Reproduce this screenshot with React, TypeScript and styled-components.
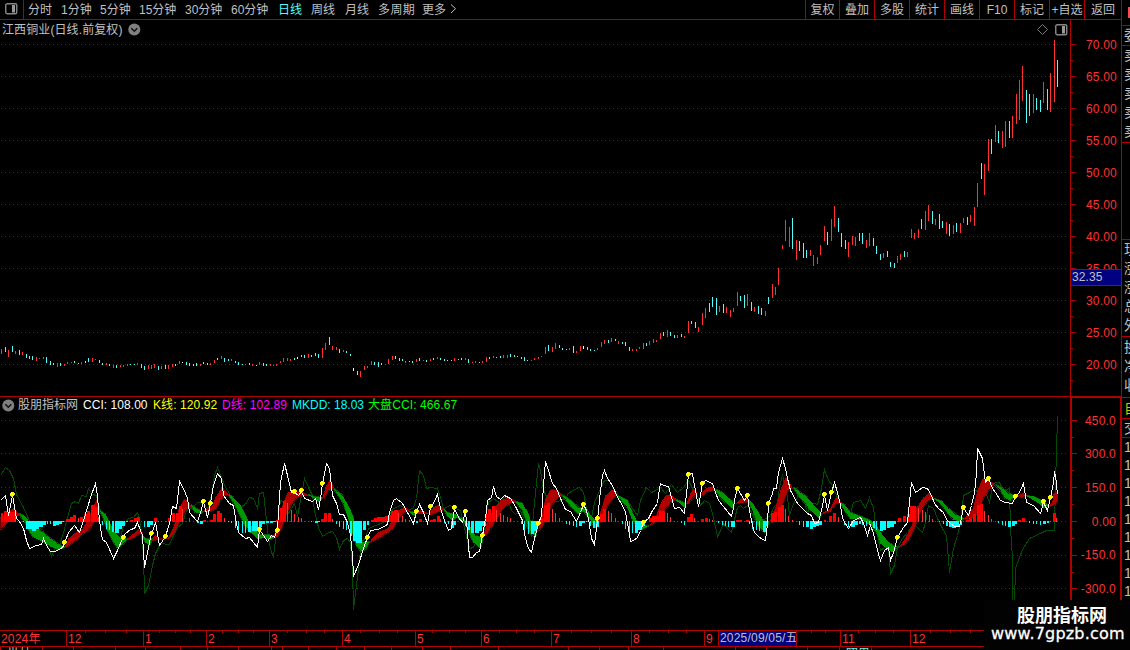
import React from "react";
import styled, { createGlobalStyle } from "styled-components";

const LINE = "#b00000";
const RED = "#ff3232";
const CYAN = "#54fcfc";
const TEXT = "#c0c0c0";

const GlobalStyle = createGlobalStyle`
  body {
    margin: 0;
    background: #000;
    overflow: hidden;
    font-family: "Liberation Sans", "Noto Sans CJK SC", sans-serif;
    font-size: 12px;
    color: ${TEXT};
  }
  svg { display: block; }
`;

const Screen = styled.div`
  position: relative;
  display: flex;
  width: 1130px;
  height: 650px;
  overflow: hidden;
  background: #000;
`;

const Main = styled.main`
  display: flex;
  flex-direction: column;
  width: 1121px;
  flex: none;
`;

const TopBar = styled.header`
  display: flex;
  box-sizing: border-box;
  height: 20px;
  flex: none;
  border-bottom: 1px solid ${LINE};
  line-height: 20px;
  white-space: nowrap;
`;

const IconCell = styled.div`
  box-sizing: border-box;
  width: 24px;
  padding: 3px 0 0 5px;
  margin-right: 4px;
  border-right: 1px solid ${LINE};
`;

const Period = styled.span<{ $w: number; $active?: boolean; $gap?: number }>`
  width: ${(p) => p.$w}px;
  height: 19px;
  letter-spacing: ${(p) => p.$gap ?? 0}px;
  color: ${(p) => (p.$active ? CYAN : TEXT)};
`;

const Chevron = styled.div`
  padding-top: 4px;
  flex: 1;
`;

const ToolButton = styled.span<{ $w: number }>`
  box-sizing: border-box;
  width: ${(p) => p.$w}px;
  height: 19px;
  border-left: 1px solid ${LINE};
  text-align: center;
`;

const Panel = styled.section<{ $h: number }>`
  display: flex;
  height: ${(p) => p.$h}px;
  flex: none;
`;

const Plot = styled.div<{ $ruled?: boolean }>`
  box-sizing: border-box;
  width: 1070px;
  flex: none;
  border-top: ${(p) => (p.$ruled ? `1px solid ${LINE}` : "0")};
`;

const Title = styled.div`
  display: flex;
  align-items: center;
  box-sizing: border-box;
  height: 20px;
  padding: 0 2px 1px 2px;
  white-space: nowrap;
`;

const TitleText = styled.span`
  width: 126px;
  line-height: 18px;
  padding-top: 1px;
  letter-spacing: 0.1px;
`;

const Spacer = styled.div`
  flex: 1;
`;

const TitleIcons = styled.div`
  display: flex;
  align-items: center;
  gap: 7px;
`;

const Legend = styled.div`
  display: flex;
  align-items: center;
  height: 17px;
  padding-left: 2px;
  line-height: 15px;
  white-space: nowrap;
`;

const LegendItem = styled.span<{ $w: number; $color: string; $gap?: number; $left?: number }>`
  width: ${(p) => p.$w}px;
  padding: 1px 0;
  margin-left: ${(p) => p.$left ?? 0}px;
  color: ${(p) => p.$color};
  letter-spacing: ${(p) => p.$gap ?? 0}px;
`;

const Axis = styled.aside<{ $thick?: boolean }>`
  position: relative;
  display: flex;
  box-sizing: border-box;
  width: 51px;
  border-left: ${(p) => (p.$thick ? 2 : 1)}px solid ${LINE};
  border-top: ${(p) => (p.$thick ? `2px solid ${LINE}` : "0")};
  border-right: ${(p) => (p.$thick ? `1px solid ${LINE}` : "0")};
`;

const Labels = styled.div<{ $top: number; $right: number }>`
  flex: 1;
  padding: ${(p) => p.$top}px ${(p) => p.$right}px 0 0;
`;

const AxisLabel = styled.div<{ $h: number }>`
  height: ${(p) => p.$h}px;
  line-height: ${(p) => p.$h + 2}px;
  text-align: right;
  letter-spacing: 0.2px;
  color: ${RED};
`;

const PriceBadge = styled.div`
  position: absolute;
  top: 249px;
  left: 0;
  box-sizing: border-box;
  width: 50px;
  height: 17px;
  border-top: 1px solid ${LINE};
  border-bottom: 1px solid ${LINE};
  padding-left: 1px;
  background: #000080;
  line-height: 15px;
  letter-spacing: 0.1px;
`;

const TimeAxis = styled.div`
  position: relative;
  display: flex;
  box-sizing: border-box;
  height: 17px;
  flex: none;
  border-top: 1px solid ${LINE};
  border-bottom: 1px solid ${LINE};
  line-height: 16px;
  color: ${RED};
  white-space: nowrap;
`;

const Month = styled.span<{ $w: number; $first?: boolean }>`
  box-sizing: border-box;
  width: ${(p) => p.$w}px;
  height: 15px;
  padding-left: 1px;
  letter-spacing: 0.2px;
  border-left: ${(p) => (p.$first ? "0" : `1px solid ${LINE}`)};
`;

const DateBadge = styled.span`
  box-sizing: border-box;
  width: 78px;
  height: 15px;
  padding-left: 1px;
  border-left: 1px solid ${LINE};
  background: #000080;
  color: ${TEXT};
  line-height: 15px;
  letter-spacing: 0.2px;
`;

const TickOverlay = styled.svg`
  position: absolute;
  top: 0;
  left: 0;
`;

const NextPane = styled.div`
  position: relative;
  display: flex;
  height: 3px;
  overflow: hidden;
  line-height: 14px;
  white-space: nowrap;
`;

const PaneText = styled.span<{ $left: number; $color: string }>`
  margin-left: ${(p) => p.$left}px;
  color: ${(p) => p.$color};
`;

const Side = styled.aside`
  box-sizing: border-box;
  width: 9px;
  flex: none;
  overflow: hidden;
  border-left: 1px solid ${LINE};
`;

const SideTop = styled.div`
  box-sizing: border-box;
  height: 25px;
  padding: 7px 0 0 6px;
`;

const SideMark = styled.div`
  height: 11px;
  background: #ff4848;
`;

const SideGroup = styled.div<{ $h: number; $top?: number }>`
  box-sizing: border-box;
  height: ${(p) => p.$h}px;
  padding: ${(p) => p.$top ?? 0}px 0 0 2px;
  border-top: 1px solid ${LINE};
  overflow: hidden;
`;

const SideText = styled.div<{ $h: number; $color?: string }>`
  width: 20px;
  height: ${(p) => p.$h}px;
  line-height: ${(p) => p.$h}px;
  font-size: 14px;
  color: ${(p) => p.$color ?? TEXT};
`;

const Watermark = styled.div`
  position: absolute;
  right: 0;
  bottom: 0;
  box-sizing: border-box;
  width: 146px;
  height: 50px;
  padding: 4px 0 0 7px;
  background: #020202;
  color: #fff;
`;

const MarkName = styled.div`
  padding-left: 26px;
  font: bold 18px/21px "Noto Sans CJK SC", sans-serif;
`;

const MarkSite = styled.div`
  font: 16px/17px "DejaVu Sans", sans-serif;
  letter-spacing: 0.2px;
  -webkit-text-stroke: 0.3px #fff;
`;

/* High and low of each daily bar in plot pixels; the letter is its colour. */
const candleText = `
349-354r 347-352c 350-357r 346-352c 351-354r 350-355c 352-355r 354-358c 356-359c 356-360c
357-361r 358-359r 357-359r 357-363c 361-365c 363-365c 363-367r 363-366c 364-366r 362-364r
362-363r 361-363c 363-364c 362-364r 361-363c 358-362c 358-362r 359-360r 360-363c 363-365c
363-365r 364-366c 365-368r 365-368c 365-367r 365-367r 364-366r 364-365c 364-365c 363-365r
364-368c 366-370c 365-369r 365-369r 364-368r 366-370c 366-369r 365-369c 365-369r 364-367r
364-366c 361-364r 362-363w 362-365c 363-366c 364-366c 363-366c 364-366r 362-364c 363-365c
363-365r 360-363r 358-360c 356-359r 358-362c 359-361c 359-361r 361-363c 362-365c 364-365c
364-365r 363-365c 364-366r 365-366c 362-365r 363-366c 364-366c 364-366r 365-366r 364-366r
361-363r 358-362r 358-361r 359-361r 358-360c 357-359w 355-357c 355-358c 354-358r 355-357c
353-356c 354-358c 348-358r 343-350r 337-345c 346-350r 347-350r 349-353c 350-352r 351-353c
354-356c 368-371w 371-375c 371-377r 366-370r 366-368r 361-365r 362-365c 362-367c 363-365c
364-365r 359-364r 356-360r 356-359c 358-361c 359-361c 361-363r 361-362c 361-363c 359-362r
358-361c 360-361r 360-362c 359-361r 358-360c 357-359r 358-360c 359-361c 360-361c 360-361c
358-361r 359-360c 358-360c 358-360r 359-363c 362-363r 361-363r 362-363c 361-363r 357-362r
357-359c 356-358r 357-358c 356-358c 355-358r 355-358r 354-357c 355-357c 356-357c 357-359c
357-361c 360-361c 360-361r 358-360r 357-359r 356-357r 347-354r 345-351c 347-352r 343-349r
345-348c 348-350c 349-350c 348-350r 346-353c 351-353r 346-351r 346-349w 347-350c 349-351c
350-351c 348-350r 342-347r 340-344r 340-343c 338-342r 339-341c 341-344r 342-344c 342-346c
347-351c 349-351r 349-351r 347-349r 343-349r 343-346c 341-345r 339-343r 340-342r 333-339r
332-336c 330-337r 332-336c 335-338c 335-338r 334-337c 336-338r 321-333r 321-324c 322-328c
327-332r 313-325r 308-318r 303-312c 297-307c 298-315c 306-312r 304-313c 307-313r 310-317r
308-312r 292-306r 296-301c 295-308c 294-306r 302-311c 307-312r 306-314c 308-315c 311-316r
297-304c 284-298r 287-295r 268-285r 245-249r 220-241r 227-247r 218-249c 240-260r 241-251c
243-258c 250-258c 250-256r 255-266r 257-264r 245-255r 226-241r 232-245c 219-241r 206-227r
218-232c 233-247c 240-249c 242-257r 236-245r 237-246r 233-241c 233-244c 240-248r 233-246r
238-246c 246-254c 254-260c 253-258r 251-257c 262-267c 263-268c 256-263r 254-260r 251-257c
252-257r 229-238r 233-239r 229-238r 219-229c 211-230r 205-221r 211-224c 219-225r 214-229c
221-228c 222-234r 224-236c 225-234r 223-232c 223-233r 218-223r 217-225c 215-222r 207-226r
183-207r 163-179c 164-195r 139-171r 139-154c 125-142r 131-143c 131-148r 121-147r 121-138c
116-138r 94-124r 80-120r 66-101r 90-123c 94-116c 94-113r 98-110c 100-112c 82-103r
89-110c 73-112r 40-102r 60-87c`;

const candleColor: Record<string, string> = { r: RED, c: CYAN, w: "#ffffff" };
const dayX = (i: number) => Math.floor(1.6 + i * 3.486);
const candles = candleText.trim().split(/\s+/).map((s, i) => {
  const [top, bottom] = s.slice(0, -1).split("-").map(Number);
  return { x: dayX(i), top, bottom, color: candleColor[s.slice(-1)] };
});

const cciLine = `0,500 5,495 8,515 12,495 15,512 16,518 19,521 23,528 26,540 29,548 36,545 41,544 43,538
46,545 50,551 55,551 62,547 64,543 68,532 74,525 79,532 83,520 87,507 90,497 95,483 97,495 98,510 100,528
102,539 106,542 113,558 117,550 122,538 125,533 130,529 134,528 137,522 142,535 144,567 147,552 150,537
155,522 159,545 165,536 169,523 172,506 176,508 179,481 183,488 187,498 189,512 197,521 200,512 203,501
207,517 210,503 213,485 217,473 221,478 223,495 229,503 233,505 235,518 238,532 245,538 249,537 257,547
259,529 267,541 271,535 274,537 277,528 280,482 284,463 287,475 291,492 294,492 298,495 301,491 304,498
312,501 315,498 318,509 320,498 322,483 326,463 329,468 332,495 336,503 339,514 343,514 347,522 350,535
352,555 353,576 358,564 363,548 367,537 370,530 378,529 387,524 389,512 393,500 396,498 402,503 407,512
413,523 416,511 419,504 423,512 427,523 430,507 433,503 437,494 440,508 444,520 448,530 451,528 454,508
458,517 462,522 465,511 467,532 469,557 472,557 476,552 479,551 482,535 485,518 487,500 491,497 493,486
496,496 500,499 504,495 510,498 515,506 517,510 522,520 525,538 528,548 531,552 534,538 538,523 541,515
543,485 545,461 548,470 552,483 556,488 560,498 565,509 570,511 576,521 580,512 583,504 586,510 588,518
591,538 594,544 597,520 600,490 602,475 604,470 607,478 612,485 617,497 622,505 625,512 628,528 630,541
633,540 637,537 640,530 643,522 648,518 652,510 657,503 658,495 660,483 663,485 668,486 671,497 674,508
679,507 684,513 686,493 688,474 692,473 694,485 698,506 700,495 702,483 705,480 712,483 715,492 718,500
723,506 731,516 733,507 735,495 737,488 740,493 744,500 747,495 749,510 752,525 754,532 758,536 762,539
765,540 767,523 768,503 772,493 773,488 776,488 778,472 780,465 782,458 785,468 787,478 790,490 797,503
802,508 807,513 811,515 814,523 818,522 821,510 824,495 827,510 831,492 834,482 837,492 840,505 842,518
848,528 853,520 860,517 863,523 867,535 870,525 873,533 877,550 880,560 884,550 888,547 890,560 893,552
897,537 900,532 903,527 907,522 909,502 911,482 915,492 918,490 922,487 927,488 931,495 934,503 938,508
943,512 946,519 950,523 954,526 959,526 961,517 963,507 966,512 968,515 971,505 974,493 976,472 977,448
982,458 985,482 988,478 992,488 995,492 1000,500 1005,502 1012,503 1015,496 1019,492 1023,483 1026,502
1033,505 1040,513 1043,502 1047,510 1050,497 1053,482 1054,471 1056,482 1057,497`;

const marketLine = `0,475 5,467 9,470 13,478 16,494 23,507 28,518 33,533 40,528 43,530 47,545 51,556 55,547
59,545 63,532 67,517 71,503 75,501 78,503 81,495 86,496 88,488 92,494 96,495 99,508 105,521 110,532 115,538
120,537 123,525 128,518 133,517 137,512 140,523 143,555 144,593 148,585 152,565 155,553 160,543 169,544
173,535 177,527 182,523 186,510 192,507 197,502 202,502 207,508 211,495 214,475 217,467 221,477 224,485
230,495 235,502 239,507 245,504 249,497 253,498 257,508 259,493 263,492 266,520 268,538 271,552 273,556
277,522 280,500 285,502 288,513 294,503 297,516 301,495 304,478 308,487 312,495 314,510 318,527 322,536
328,532 332,531 336,537 339,549 343,540 347,538 350,542 352,568 353,609 357,577 361,542 365,537 368,528
375,525 383,522 388,515 393,508 400,505 408,510 413,507 416,498 419,470 423,475 426,488 430,487 437,488
440,497 443,508 450,505 455,508 460,510 463,523 467,540 469,548 473,547 477,537 482,542 485,517 488,502
493,498 500,503 503,497 507,498 511,510 515,514 520,510 525,523 531,535 535,492 538,463 540,470 543,490
548,500 557,501 565,498 568,493 572,490 579,487 583,492 586,508 591,517 594,502 600,488 604,480 609,480
615,493 620,498 627,500 632,508 637,515 640,500 646,487 651,492 655,490 660,487 665,493 671,484 677,492
683,487 688,480 693,490 697,495 700,505 704,500 709,503 713,517 717,536 720,530 723,523 727,528 731,532
733,523 737,507 740,505 743,508 747,505 750,510 755,520 762,520 770,515 773,507 777,503 779,487 782,474
787,497 789,515 793,503 798,495 803,497 807,513 810,502 817,504 821,488 824,469 828,480 832,485 836,495
841,505 846,512 850,513 853,502 860,500 865,508 869,497 873,508 876,530 880,550 884,547 888,548 890,573
894,565 897,547 902,538 907,532 913,523 922,532 925,522 928,505 933,508 937,518 942,528 946,535 949,572
953,548 957,535 960,522 963,495 969,492 974,489 978,492 983,487 989,502 992,485 995,482 999,482 1003,490
1009,488 1010,528 1012,558 1012,602 1014,602 1015,568 1022,549 1029,538 1040,533 1046,530 1054,530 1055,482
1056,452 1057,416`;

const risingBands = [
  "0,517 7,514 13,507 17,512 20,515 15,515 8,520 0,529",
  "64,547 68,538 75,532 82,528 87,520 92,508 96,499 99,510 95,518 90,527 83,533 75,540 68,545",
  "126,539 133,533 137,529 142,533 138,533 133,537 128,539",
  "151,540 155,534 158,538 167,538 173,527 178,510 183,499 187,500 192,507 187,507 183,513 178,523 173,533 168,538 158,539",
  "202,511 212,505 215,497 222,486 224,490 228,494 223,495 220,500 215,508 210,511",
  "273,537 278,522 282,505 287,492 293,491 300,491 308,495 300,495 295,498 290,505 285,515 282,525 277,536",
  "322,497 326,485 330,478 333,487 328,490 323,498",
  "370,540 377,532 387,528 393,518 397,510 405,507 408,510 403,512 397,518 392,528 385,533 377,538 370,542",
  "413,513 420,510 427,513 420,513",
  "428,513 433,507 438,504 443,509 438,511 430,514",
  "483,535 487,520 493,508 500,500 508,497 515,501 508,503 503,507 497,517 492,525 485,535",
  "538,530 541,517 545,498 550,489 557,490 562,495 557,497 552,503 547,512 542,525",
  "597,523 600,512 605,495 612,489 617,493 612,498 607,505 602,520",
  "648,525 655,518 660,503 665,495 670,494 675,499 670,502 665,508 658,518 652,523",
  "686,503 690,493 693,488 696,492 692,497 688,503",
  "700,493 707,487 713,486 715,489 707,491 702,495",
  "735,503 740,498 747,498 749,501 742,502",
  "770,520 775,507 780,490 785,477 788,480 792,487 787,490 782,503 777,515 771,522",
  "821,513 830,508 835,497 838,498 840,502 835,503 830,511",
  "897,547 902,542 907,533 912,523 916,507 923,497 929,492 933,497 927,500 922,507 917,518 912,532 905,543",
  "963,518 968,513 973,507 977,490 982,478 987,480 993,483 988,490 983,497 978,510 973,517 967,518",
  "1018,495 1023,492 1025,495 1020,497",
  "1047,506 1052,501 1054,492 1057,493 1057,500 1052,505",
];

const fallingBands = [
  "18,513 23,515 27,519 29,523 35,528 42,532 50,538 57,543 64,547 57,549 50,546 42,541 33,537 28,529 25,522",
  "99,510 105,514 108,520 113,530 120,538 127,538 123,543 117,547 112,540 107,530 103,518",
  "142,535 145,538 152,538 149,545 145,542",
  "190,504 197,509 202,511 200,513 195,512 192,508",
  "228,494 233,497 240,505 246,517 252,527 260,534 277,535 270,539 263,537 257,538 250,532 243,522 237,510 233,502",
  "307,494 313,496 322,497 318,501 313,498",
  "333,488 342,495 348,505 353,517 355,528 362,542 369,541 365,548 361,551 356,545 352,532 348,518 343,503 338,495",
  "408,511 416,512 413,515",
  "443,508 447,512 455,514 463,519 468,523 475,535 482,537 480,548 473,542 468,530 463,520 455,517 452,520 447,516",
  "515,501 522,503 528,513 532,527 537,528 535,537 531,533 527,523 522,510",
  "561,494 570,500 578,507 583,508 588,512 595,520 595,527 588,517 583,510 577,513 570,505",
  "617,495 627,500 632,512 637,521 643,525 648,525 640,529 635,523 631,517 627,507",
  "673,498 685,503 684,507 678,502",
  "715,489 722,492 728,498 734,503 732,508 725,502 720,497",
  "748,499 753,504 758,512 763,520 768,522 764,532 758,525 753,512 750,505",
  "793,487 800,492 807,497 813,504 821,513 819,518 810,510 805,503 798,495",
  "840,502 845,505 850,512 860,516 870,520 877,527 882,534 888,542 896,547 892,552 885,547 880,543 877,533 872,526 860,519 850,518 845,511",
  "933,498 942,501 948,508 955,514 963,518 959,521 953,519 947,512 940,503",
  "993,483 1002,488 1008,493 1014,495 1010,500 1005,498 1000,490",
  "1025,495 1033,496 1041,500 1048,505 1043,507 1037,502",
];

/* Histogram: x, width, height; a negative height hangs below zero. */
const barText = `1,2,9 4,4,11 8,4,10 12,3,10 15,1,9 19,1,1 23,1,-1 26,3,-8 29,3,-8 32,4,-10 36,3,-8 39,4,-6
43,3,-4 47,1,-3 50,1,-3 53,3,-5 56,3,-4 59,3,-3 62,2,-1 66,4,3 70,3,5 73,3,7 78,1,4 80,3,5 84,3,8 87,3,11
91,4,17 95,3,15 98,1,5 102,1,-4 106,1,-8 109,1,-9 112,2,-11 115,4,-12 119,3,-8 122,3,-5 126,2,-1 130,3,2
134,3,4 137,3,5 144,1,-6 147,3,-6 150,3,-4 154,3,4 158,1,1 161,1,1 165,2,1 168,3,4 172,3,9 176,3,9 179,3,16
182,1,13 189,1,4 197,2,-2 200,3,-3 203,3,2 210,3,2 213,3,8 217,3,11 220,2,9 224,1,4 228,1,-1 231,1,-2
235,1,-7 238,1,-9 242,1,-12 245,1,-12 248,3,-11 252,4,-10 255,3,-10 259,3,-6 262,3,-3 266,3,-2 270,3,-2
273,3,-1 276,3,2 280,3,14 283,3,21 287,1,19 291,1,12 294,1,8 298,1,5 301,1,4 311,1,-1 315,3,-2 318,2,-1
321,3,3 324,3,9 328,3,9 332,1,3 336,1,-3 339,1,-6 343,1,-8 346,1,-9 350,2,-15 353,3,-20 356,6,-22 360,2,-16
363,3,-9 367,2,-4 371,3,2 374,3,4 377,4,5 381,4,5 385,3,6 388,3,7 391,3,11 394,4,12 398,1,9 402,1,6 405,1,3
409,1,2 413,1,-2 416,2,-2 419,3,3 430,3,2 433,3,3 437,3,6 440,1,3 444,1,-2 448,1,-3 451,3,-7 454,2,-4
465,1,-5 468,2,-9 471,3,-12 475,4,-12 479,3,-10 482,4,-5 485,3,8 488,3,13 492,3,16 496,1,12 500,1,9 503,1,7
507,1,5 510,1,4 521,1,-3 524,1,-9 528,1,-13 531,3,-13 534,3,-10 537,2,-4 540,3,4 544,3,17 547,3,19 552,1,13
555,1,9 559,1,4 566,1,-3 569,1,-4 573,1,-5 576,1,-6 579,3,-5 582,3,-2 586,1,-1 590,1,-5 593,2,-7 596,3,-6
600,3,8 603,3,13 608,1,11 611,1,9 615,1,4 622,1,-3 625,1,-8 629,1,-11 632,1,-12 635,3,-12 638,4,-9 642,3,-5
649,3,4 652,4,6 656,3,6 659,6,11 667,1,9 670,1,5 674,1,1 681,1,-2 684,1,-4 687,3,5 690,3,8 694,1,4 701,3,3
705,3,4 709,1,3 712,1,2 718,1,-2 722,1,-4 725,1,-5 728,1,-6 731,4,-6 736,3,2 739,3,2 746,3,2 749,1,-3
752,1,-8 756,1,-9 759,1,-10 763,3,-11 766,2,-5 771,3,9 774,3,10 778,3,15 781,3,17 785,1,13 788,1,6 792,1,2
799,1,-4 803,1,-6 806,3,-6 810,3,-8 813,3,-6 816,3,-5 819,3,-4 824,2,2 829,3,6 833,3,9 838,1,5 844,1,-4
848,1,-6 851,4,-6 855,3,-4 859,2,-3 862,1,-4 866,1,-5 869,1,-4 873,2,-7 876,1,-9 880,3,-10 883,3,-9
887,3,-7 890,4,-6 894,2,-3 898,3,4 903,3,6 907,3,8 910,6,16 918,1,14 922,1,12 925,1,10 929,1,7 932,1,3
939,1,-1 943,1,-3 946,2,-5 949,3,-6 952,4,-7 956,3,-6 960,2,-4 966,3,2 969,3,4 973,3,8 977,3,17 980,3,18
984,1,11 988,1,7 991,1,3 998,1,-2 1002,1,-4 1005,1,-5 1008,3,-6 1012,3,-5 1015,2,-3 1018,3,2 1022,3,4
1029,1,-2 1033,1,-3 1036,1,-3 1040,1,-4 1043,3,-3 1047,2,-2 1050,1,1 1053,3,9 1056,1,4`;
const bars = barText.split(/\s+/).map((b) => b.split(",").map(Number));

const signals = `12,494 64,542 123,537 151,533 165,536 203,501 210,503 259,529 277,530 294,491 301,490 322,483
367,537 416,511 430,506 454,507 465,511 482,535 538,523 583,504 597,518 643,522 688,474 702,483 737,488
747,495 768,503 824,494 831,492 897,537 963,507 988,478 1015,496 1043,501 1050,497`
  .split(/\s+/)
  .map((s) => s.split(",").map(Number));

const priceRows = [44, 76, 108, 140, 172, 204, 236, 268, 300, 332, 364];
const cciRows = [420, 453, 487, 521, 555, 588];
const axisTicks = [85, 105, 126, 159, 175, 190, 222, 238, 253, 287, 306, 324, 360, 379, 397, 432, 449, 465, 499,
  516, 534, 571, 591, 611, 649, 668, 686, 811, 825, 858, 875, 893, 930, 950, 970];
const lowerTicks = [0, 42, 73, 115, 145, 180, 207, 238, 271, 282, 308, 336, 364, 391, 422, 450, 498, 568, 599, 628,
  663, 735, 766, 807, 839, 871];

const periods: [string, number, number?][] = [
  ["分时", 33], ["1分钟", 39], ["5分钟", 39], ["15分钟", 46], ["30分钟", 46], ["60分钟", 47],
  ["日线", 33], ["周线", 34], ["月线", 33], ["多周期", 44, 0.4], ["更多", 28],
];
const tools: [string, number][] = [
  ["复权", 34], ["叠加", 35], ["多股", 35], ["统计", 35], ["画线", 35], ["F10", 35], ["标记", 35],
  ["+自选", 35], ["返回", 37],
];
const months: [string, number][] = [
  ["2024年", 66], ["12", 77], ["1", 63], ["2", 63], ["3", 73], ["4", 73], ["5", 66], ["6", 70], ["7", 80],
  ["8", 73], ["9", 14],
];

const PaneIcon = () => (
  <svg width="13" height="12" viewBox="0 0 13 12">
    <rect x="0.75" y="0.75" width="11" height="10" rx="1.5" fill="none" stroke="#888" strokeWidth="1.4" />
    <rect x="7" y="2" width="3" height="7.5" fill="#999" />
  </svg>
);

const DropIcon = () => (
  <svg width="13" height="13" viewBox="0 0 13 13">
    <circle cx="6.3" cy="6.5" r="6" fill="#808080" />
    <path d="M3.3 5.3 L6.3 8.2 L9.3 5.3" fill="none" stroke="#111" strokeWidth="1.5" />
  </svg>
);

const Dots = ({ rows }: { rows: number[] }) => (
  <g stroke={LINE} strokeDasharray="1 3">
    {rows.map((y) => (
      <line key={y} x1="1" x2="1068" y1={y + 0.5} y2={y + 0.5} />
    ))}
  </g>
);

const PriceChart = () => (
  <svg width="1070" height="356" viewBox="0 40 1070 356" shapeRendering="crispEdges">
    <Dots rows={priceRows} />
    {candles.map((c) => (
      <rect key={c.x} x={c.x} y={c.top} width="1" height={c.bottom - c.top} fill={c.color} />
    ))}
  </svg>
);

const CciChart = () => (
  <svg width="1070" height="216" viewBox="0 414 1070 216" shapeRendering="crispEdges">
    <Dots rows={cciRows} />
    <g transform="translate(0.5 0.5)" fill="none">
      <polyline points={marketLine} stroke="#004c00" />
      {fallingBands.map((p) => (
        <polygon key={p} points={p} fill="#009800" stroke="#009800" strokeWidth="0.6" />
      ))}
      {risingBands.map((p) => (
        <polygon key={p} points={p} fill="#b00000" stroke="#b00000" strokeWidth="0.6" />
      ))}
    </g>
    {candles.map((c) => (
      <rect key={c.x} x={c.x} y="521" width="1" height="1" fill="#ff0000" />
    ))}
    {bars.map(([x, w, h]) => (
      <rect key={x} x={x} y={h > 0 ? 522 - h : 521} width={w} height={Math.abs(h)} fill={h > 0 ? (w > 1 ? "#ff0000" : RED) : "#00ffff"} />
    ))}
    <polyline transform="translate(0.5 0.5)" points={cciLine} fill="none" stroke="#fff" />
    {signals.map(([x, y]) => (
      <path key={x} d={`M${x - 1} ${y - 2}h2v1h1v2h-1v1h-2v-1h-1v-2h1z`} fill="#ffff00" stroke="#ffff00" strokeWidth="0.9" />
    ))}
    <path d="M1054 493h3v1h1v3h-1v1h-3v-1h-1v-3h1z" fill="#b00000" />
  </svg>
);

const Ticks = ({ rows, step, from, height }: { rows: number[]; step: number; from: number; height: number }) => (
  <svg width="6" height={height} viewBox={`0 ${from} 6 ${height}`} shapeRendering="crispEdges" fill={LINE}>
    {rows.map((y) => (
      <g key={y}>
        <rect y={y} width="5" height="1" />
        <rect y={y + step} width="2" height="1" />
      </g>
    ))}
  </svg>
);

export default function App() {
  return (
    <Screen>
      <GlobalStyle />
      <Main>
        <TopBar>
          <IconCell><PaneIcon /></IconCell>
          {periods.map(([label, w, gap]) => (
            <Period key={label} $w={w} $gap={gap} $active={label === "日线"}>{label}</Period>
          ))}
          <Chevron>
            <svg width="7" height="10" viewBox="0 0 7 10">
              <path d="M1 0.5 L5.5 4.7 L1 9" fill="none" stroke={TEXT} />
            </svg>
          </Chevron>
          {tools.map(([label, w]) => (
            <ToolButton key={label} $w={w}>{label}</ToolButton>
          ))}
        </TopBar>

        <Panel $h={376}>
          <Plot>
            <Title>
              <TitleText>江西铜业(日线.前复权)</TitleText>
              <DropIcon />
              <Spacer />
              <TitleIcons>
                <svg width="11" height="11" viewBox="0 0 11 11">
                  <path d="M5.5 0.5 L10.5 5.5 L5.5 10.5 L0.5 5.5 Z" fill="none" stroke="#777" />
                </svg>
                <PaneIcon />
              </TitleIcons>
            </Title>
            <PriceChart />
          </Plot>
          <Axis>
            <Ticks rows={priceRows} step={16} from={20} height={376} />
            <Labels $top={8} $right={4}>
              {priceRows.map((y, i) => (
                <AxisLabel key={y} $h={32}>{(70 - i * 5).toFixed(2)}</AxisLabel>
              ))}
            </Labels>
            <PriceBadge>32.35</PriceBadge>
          </Axis>
        </Panel>

        <Panel $h={234}>
          <Plot $ruled>
            <Legend>
              <DropIcon />
              <LegendItem $left={3} $w={65} $color={TEXT}>股朋指标网</LegendItem>
              <LegendItem $w={70} $color="#ffffff" $gap={0.05}>CCI: 108.00</LegendItem>
              <LegendItem $w={69} $color="#ffff00" $gap={0.1}>K线: 120.92</LegendItem>
              <LegendItem $w={70} $color="#ff00ff" $gap={0.1}>D线: 102.89</LegendItem>
              <LegendItem $w={76} $color="#00ffff">MKDD: 18.03</LegendItem>
              <LegendItem $w={92} $color="#00ff00" $gap={0.1}>大盘CCI: 466.67</LegendItem>
            </Legend>
            <CciChart />
          </Plot>
          <Axis $thick>
            <Ticks rows={cciRows} step={17} from={398} height={232} />
            <Labels $top={5.7} $right={4}>
              {["450.0", "300.0", "150.0", "0.00", "-150.0", "-300.0"].map((t) => (
                <AxisLabel key={t} $h={33.65}>{t}</AxisLabel>
              ))}
            </Labels>
          </Axis>
        </Panel>

        <TimeAxis>
          {months.map(([label, w], i) => (
            <Month key={label + i} $w={w} $first={i === 0}>{label}</Month>
          ))}
          <DateBadge>2025/09/05/五</DateBadge>
          <Month $w={44} />
          <Month $w={70}>11</Month>
          <Month $w={211}>12</Month>
          <TickOverlay width="1070" height="2" shapeRendering="crispEdges" fill={LINE}>
            {axisTicks.map((x) => <rect key={x} x={x} width="1" height="2" />)}
          </TickOverlay>
        </TimeAxis>
        <NextPane>
          <PaneText $left={7} $color={TEXT}>世林</PaneText>
          <PaneText $left={815} $color={CYAN}>昭男</PaneText>
          <TickOverlay width="1070" height="3" shapeRendering="crispEdges" fill={LINE}>
            {lowerTicks.map((x) => <rect key={x} x={x} width="1" height="3" />)}
          </TickOverlay>
        </NextPane>
      </Main>

      <Side>
        <SideTop><SideMark /></SideTop>
        <SideGroup $h={20}><SideText $h={19}>委</SideText></SideGroup>
        <SideGroup $h={97}>
          {[1, 2, 3, 4, 5].map((n) => <SideText key={n} $h={19}>卖</SideText>)}
        </SideGroup>
        <SideGroup $h={97} />
        <SideGroup $h={97}>
          {["现", "涨", "涨", "总", "外"].map((t, i) => <SideText key={i} $h={19}>{t}</SideText>)}
        </SideGroup>
        <SideGroup $h={61} $top={1}>
          {["换", "净", "收"].map((t) => <SideText key={t} $h={19}>{t}</SideText>)}
        </SideGroup>
        <SideGroup $h={21}><SideText $h={20} $color="#c8c800">自</SideText></SideGroup>
        <SideGroup $h={19}><SideText $h={18}>交</SideText></SideGroup>
        <SideGroup $h={213}>
          {Array.from({ length: 9 }, (_, i) => <SideText key={i} $h={18}>1</SideText>)}
        </SideGroup>
      </Side>

      <Watermark>
        <MarkName>股朋指标网</MarkName>
        <MarkSite>www.7gpzb.com</MarkSite>
      </Watermark>
    </Screen>
  );
}
